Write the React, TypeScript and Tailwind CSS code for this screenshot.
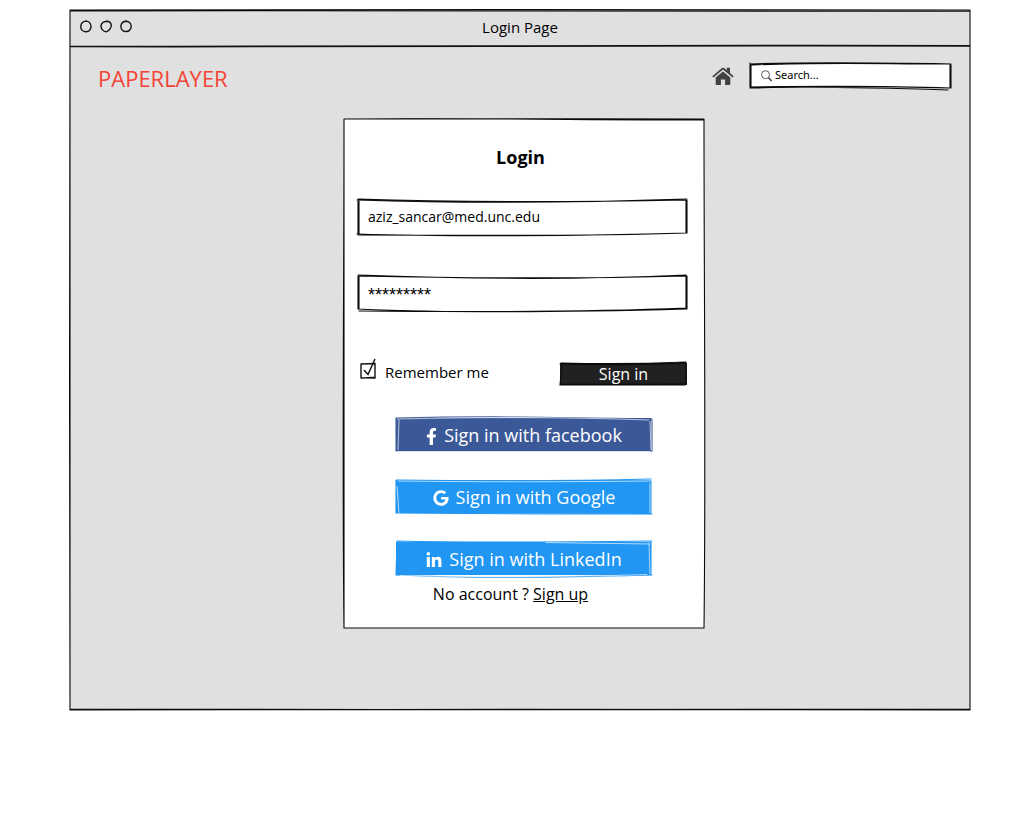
import type { ReactNode } from "react";
import { FaFacebookF, FaGoogle, FaLinkedinIn } from "react-icons/fa";

type SketchProps = {
  viewBox: string;
  fill: string;
  shape: string;
  stroke?: string;
  lines: string;
  highlights?: string;
};

function Sketch({ viewBox, fill, shape, stroke = "#0b0b0b", lines, highlights }: SketchProps) {
  return (
    <svg
      aria-hidden="true"
      viewBox={viewBox}
      preserveAspectRatio="none"
      className="pointer-events-none absolute inset-0 h-full w-full overflow-visible"
    >
      <path d={shape} fill={fill} />
      <path d={lines} fill="none" stroke={stroke} strokeWidth="1.1" strokeLinecap="round" vectorEffect="non-scaling-stroke" />
      {highlights && (
        <path d={highlights} fill="none" stroke="#ffffff" strokeOpacity="0.65" strokeWidth="1" vectorEffect="non-scaling-stroke" />
      )}
    </svg>
  );
}

function SocialButton({ icon, children, sketch }: { icon: ReactNode; children: ReactNode; sketch: ReactNode }) {
  return (
    <button type="button" className="relative h-[34px] w-full text-lg text-white">
      {sketch}
      <span className="relative flex items-center justify-center gap-[7px]">
        {icon}
        {children}
      </span>
    </button>
  );
}

function TitleBar() {
  return (
    <div className="relative flex h-9 items-center justify-center">
      <svg aria-hidden="true" viewBox="0 0 60 16" className="absolute left-2 top-2 h-4 w-[60px]" fill="none" stroke="#111" strokeWidth="1.4">
        <path d="M7.500 3.200C10.800 2.800 13.300 5.500 13 8.800C12.700 12 10.300 13.800 7.600 13.700C4.600 13.600 2.600 11.400 2.800 8.200C3 5.200 4.800 3.200 8.500 3.100" />
        <path d="M26.500 4C29 2.600 32 3.500 33.100 6C34.200 9 31.300 13 28.400 13.900C25.200 13.700 22.700 10.800 23 7.800C23.300 5 26 3.400 29.500 3.300" />
        <path d="M47.500 3.300C51 2.900 53.500 5.600 53.200 8.600C52.900 11.800 50.500 13.800 47.700 13.500C44.500 13.600 42.600 11 42.900 8C43.200 5.200 45.200 3.100 49 3.200" />
      </svg>
      <h1 className="pb-0.5 text-[15px]">Login Page</h1>
      <svg aria-hidden="true" viewBox="0 0 900 4" preserveAspectRatio="none" className="absolute inset-x-0 -bottom-0.5 h-1 w-full" fill="none" stroke="#111">
        <path d="M0 2.500C300 3 600 1 900 1.800" strokeWidth="1.700" />
      </svg>
    </div>
  );
}

function Header() {
  return (
    <header className="flex items-center justify-between pl-7 pr-[19px] pt-4">
      <div className="pt-1 text-[22px] leading-6 text-[#f44336]">PAPERLAYER</div>
      <div className="flex items-center gap-4">
        <a href="#home" aria-label="Home">
          <svg aria-hidden="true" viewBox="0 0 22 18" className="h-[18px] w-[22px]" fill="#424242">
            <path d="M11 4.500L3.700 10.500V17.200C3.700 17.700 4 18 4.500 18H8.900V12.500H13.100V18H17.500C18 18 18.300 17.700 18.300 17.200V10.500Z" />
            <path d="M0.300 9.200L10 1C10.600 0.500 11.400 0.500 12 1L14.700 3.300V0.700H18V6.100L21.700 9.200L20.600 10.500L11 2.600L1.400 10.500Z" />
          </svg>
        </a>
        <div className="relative flex h-[26px] w-[201px] items-center">
          <Sketch
            viewBox="0 0 201 26"
            fill="#ffffff"
            shape="M1 1L100 0L200 1V25L1 24Z"
            lines="M0 1C60 -1 140 0 201 1M2 2C70 -1 130 1 199 1M0 0V25M1 1V24M200 1V24M201 2V25M0 24C80 23 140 23 200 25M1 25C70 23 135 25 198 27"
          />
          <svg aria-hidden="true" viewBox="0 0 12 12" className="relative ml-[11px] h-3 w-3" fill="none" stroke="#333">
            <circle cx="4.500" cy="4.700" r="4" strokeWidth="0.800" />
            <path d="M7.500 7.700L10.600 10.900" strokeWidth="1.400" />
          </svg>
          <input
            type="search"
            aria-label="Search"
            placeholder="Search..."
            className="relative ml-0.5 min-w-0 flex-1 bg-transparent pb-0.5 font-['Noto_Sans',sans-serif] text-[11px] text-black outline-none placeholder:text-black"
          />
        </div>
      </div>
    </header>
  );
}

function LoginCard() {
  return (
    <form className="relative w-[360px] pb-[22px] pl-3.5 pr-[17px] pt-6">
      <Sketch
        viewBox="0 0 360 509"
        fill="#ffffff"
        shape="M0 0H360V509H0Z"
        lines="M0 0C110 1 240 -1 360 0M0 0C120 -1 250 1 360 1M0 0C0 180 -2 340 0 509M0 1C-1 200 -1 380 0 509M360 0C360 170 362 340 360 509M0 509C110 510 250 508 360 509M0 509H360"
      />
      <div className="relative">
        <h2 className="pr-1 text-center text-lg leading-7 font-bold">Login</h2>
        <div className="relative mt-[29px] h-[34px]">
          <Sketch
            viewBox="0 0 330 34"
            fill="#ffffff"
            shape="M0 0L160 2L330 0V33L160 35L0 34Z"
            lines="M-1 0C90 3 210 3 330 -1M0 -1C120 3 220 2 329 0M0 0V34M1 0V34M329 0V33M330 0V33M-1 34C90 37 230 36 330 33M0 35C130 35 220 37 329 33"
          />
          <input
            type="email"
            aria-label="Email"
            defaultValue="aziz_sancar@med.unc.edu"
            className="relative h-full w-full bg-transparent px-2.5 pb-0.5 text-sm outline-none"
          />
        </div>
        <div className="relative mt-[42px] h-[34px]">
          <Sketch
            viewBox="0 0 330 34"
            fill="#ffffff"
            shape="M0 0L160 3L330 0V32L160 35L0 34Z"
            lines="M0 -1C110 3 220 4 329 -1M0 0C100 2 220 3 330 0M0 0V33M1 0V33M329 0V33M330 0V33M0 33C90 37 220 36 330 33M1 35C110 36 230 36 329 32"
          />
          <input
            type="text"
            aria-label="Password"
            defaultValue="*********"
            className="relative h-full w-full bg-transparent px-2.5 pt-1 font-['Liberation_Sans',sans-serif] text-lg outline-none"
          />
        </div>
        <div className="mt-[52px] flex h-6 items-center justify-between">
          <label className="relative flex items-center pb-1 pl-[27px] text-[15px] leading-5">
            <input type="checkbox" defaultChecked className="peer absolute left-0.5 top-0.5 h-4 w-4 appearance-none" />
            <svg aria-hidden="true" viewBox="0 0 18 22" className="pointer-events-none absolute -top-1 left-0.5 h-[22px] w-[18px]" fill="none" stroke="#111" strokeWidth="1.400">
              <path d="M1 6L15 5.500L15 20L1 19.700L1 5.500M1 20.300L15.500 19.300" />
            </svg>
            <svg aria-hidden="true" viewBox="0 0 18 22" className="pointer-events-none invisible absolute -top-1 left-0.5 h-[22px] w-[18px] peer-checked:visible" fill="none" stroke="#111" strokeWidth="1.500">
              <path d="M4 12L8 16.500L15 1" />
            </svg>
            Remember me
          </label>
          <button type="submit" className="relative h-[22px] w-[127px] text-base leading-[22px] text-white">
            <Sketch
              viewBox="0 0 127 22"
              fill="#212121"
              shape="M0 0H127V22H0Z"
              lines="M1 0C40 1 80 1 126 -1M0 1C40 2 90 2 126 0M2 0L0 22M126 1V20M0 22H125M0 21C40 22 90 21 126 21"
            />
            <span className="relative">Sign in</span>
          </button>
        </div>
        <div className="mt-8 flex flex-col gap-7 pl-[38px] pr-[35px]">
          <SocialButton
            icon={<FaFacebookF aria-hidden="true" className="mt-0.5 h-[17px] w-[11px]" />}
            sketch={
              <Sketch
                viewBox="0 0 257 34"
                fill="#3b5998"
                stroke="#3b5998"
                shape="M0 0H256V33H0Z"
                lines="M0 0C90 -2 150 -1 257 1M0 33H257M0 0V33M257 1V33"
                highlights="M1 1C80 -1 170 -1 254 2M3 2L2 32M255 3L256 32M1 33.500H255"
              />
            }
          >
            Sign in with facebook
          </SocialButton>
          <SocialButton
            icon={<FaGoogle aria-hidden="true" className="mt-0.5 h-4 w-4" />}
            sketch={
              <Sketch
                viewBox="0 0 257 34"
                fill="#2196f3"
                stroke="#2196f3"
                shape="M0 0H256V34L0 33Z"
                lines="M0 0C90 1 170 1 256 -1M0 33C90 34 170 34 257 34M0 0V33M256 1V34"
                highlights="M2 1C80 2 170 2 256 1M1 6L3 33M255 3V33"
              />
            }
          >
            Sign in with Google
          </SocialButton>
          <SocialButton
            icon={<FaLinkedinIn aria-hidden="true" className="mt-0.5 h-[17px] w-4" />}
            sketch={
              <Sketch
                viewBox="0 0 257 34"
                fill="#2196f3"
                stroke="#2196f3"
                shape="M0 0H256V33H0Z"
                lines="M1 -1C80 1 170 0 257 -1M0 33C90 37 170 35 257 33M1 0L0 33M256 0V33"
                highlights="M150 0.500L255 2M254 1L255 32M4 33.500C80 35 180 35 252 32.500"
              />
            }
          >
            Sign in with LinkedIn
          </SocialButton>
        </div>
        <p className="mt-1.5 pr-6 text-center text-base leading-6">
          No account ?{" "}
          <a href="#signup" className="underline">
            Sign up
          </a>
        </p>
      </div>
    </form>
  );
}

export default function App() {
  return (
    <div className="min-h-screen bg-white pb-[110px] pl-[70px] pr-[50px] pt-2.5 font-['Open_Sans',sans-serif] text-black">
      <main className="relative">
        <Sketch
          viewBox="0 0 900 700"
          fill="#e0e0e0"
          shape="M0 0H900V700H0Z"
          lines="M0 0C250 -1 650 0 900 0M0 1C300 0 600 2 900 1M0 0C1 180 -2 500 0 700M0 0C0 200 -2 450 0 700M900 0V700M900 1C901 200 899 500 900 699M0 699C300 700 600 700 900 699M0 700C200 699 700 699 900 700"
        />
        <div className="relative">
          <TitleBar />
          <Header />
          <div className="flex justify-center pb-[82px] pl-2 pt-[29px]">
            <LoginCard />
          </div>
        </div>
      </main>
    </div>
  );
}
